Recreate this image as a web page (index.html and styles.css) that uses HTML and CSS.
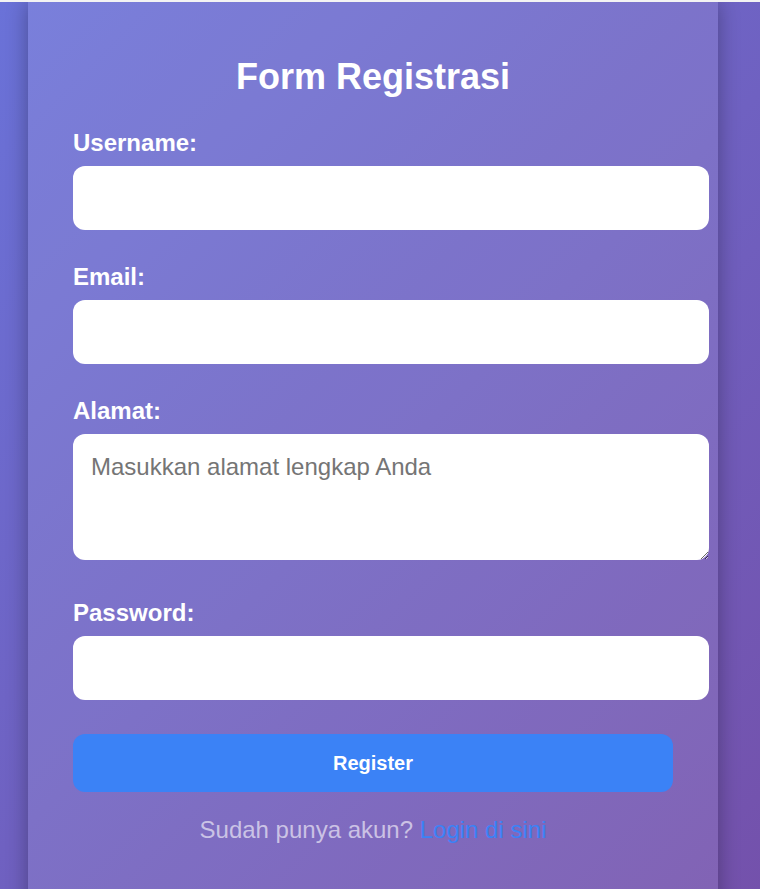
FILE: index.html
```html
<!DOCTYPE html>
<html lang="id">
<head>
<meta charset="utf-8">
<title>Form Registrasi</title>
<link rel="stylesheet" href="styles.css">
</head>
<body>
<main class="card">
  <h2 class="title">Form Registrasi</h2>
  <form class="form">
    <div class="field">
      <label class="label" for="username">Username:</label>
      <input class="input" type="text" id="username">
    </div>
    <div class="field">
      <label class="label" for="email">Email:</label>
      <input class="input" type="email" id="email">
    </div>
    <div class="field">
      <label class="label" for="alamat">Alamat:</label>
      <textarea class="input textarea" id="alamat" placeholder="Masukkan alamat lengkap Anda"></textarea>
    </div>
    <div class="field">
      <label class="label" for="password">Password:</label>
      <input class="input" type="password" id="password">
    </div>
    <button class="btn" type="button">Register</button>
  </form>
  <p class="login">Sudah punya akun? <a class="login-link" href="#">Login di sini</a></p>
</main>
</body>
</html>
```

FILE: styles.css
```css
html {
  background: #f3f3f3;
}

body {
  margin: 2px 0 0;
  padding: 0 14px 0 0;
  min-height: 940px;
  display: flex;
  justify-content: center;
  align-items: flex-start;
  background: linear-gradient(135deg, #6a72d8 0%, #7450aa 100%);
  font-family: "Liberation Sans", Arial, sans-serif;
}

.card {
  width: 600px;
  padding: 54px 45px 70px;
  background: rgba(255, 255, 255, 0.1);
  box-shadow: 0 0 20px rgba(0, 0, 0, 0.32);
  color: #fff;
}

.title {
  margin: 0 0 31px;
  font-size: 36px;
  font-weight: bold;
  text-align: center;
  line-height: normal;
}

.form {
  margin: 0;
}

.field {
  margin-bottom: 33px;
}

.label {
  display: block;
  margin-bottom: 10px;
  font-size: 24px;
  line-height: 27px;
  font-weight: bold;
}

.input {
  display: block;
  width: 100%;
  height: 64px;
  padding: 0 18px;
  border: none;
  border-radius: 12px;
  background: #fff;
  font-family: "Liberation Sans", Arial, sans-serif;
  font-size: 24px;
  outline: none;
}

.textarea {
  box-sizing: content-box;
  height: 107px;
  padding-top: 19px;
  padding-bottom: 0;
  resize: both;
  margin-bottom: 39px;
}

.field:has(.textarea) {
  margin-bottom: 0;
}

.textarea::placeholder {
  color: #757575;
}

.btn {
  display: block;
  width: 600px;
  height: 58px;
  margin-top: 34px;
  border: none;
  border-radius: 12px;
  background: #3b82f6;
  color: #fff;
  font-family: "Liberation Sans", Arial, sans-serif;
  font-size: 20px;
  font-weight: bold;
  cursor: pointer;
}

.login {
  margin: 24px 0 0;
  text-align: center;
  font-size: 24px;
  color: rgba(255, 255, 255, 0.6);
}

.login-link {
  color: #3b82f6;
  text-decoration: none;
}
```
